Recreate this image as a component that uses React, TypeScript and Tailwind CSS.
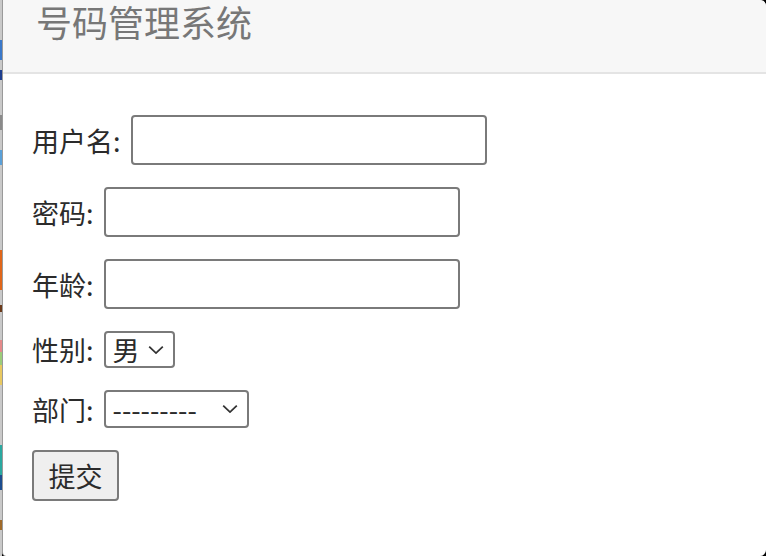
import React from 'react';

const font = "font-['Noto_Sans_CJK_SC',sans-serif]";

function Chevron() {
  return (
    <svg width="16" height="9" viewBox="0 0 16 9" className="pointer-events-none absolute top-1/2 -translate-y-1/2 right-[11px]">
      <path d="M1.2 1.2l6.8 6.4 6.8-6.4" fill="none" stroke="#333" strokeWidth="1.8" />
    </svg>
  );
}

function Field({ label }: { label: string }) {
  return (
    <div className="flex items-center gap-[10px]">
      <span>{label}:</span>
      <input
        type="text"
        className="h-[50px] w-[356px] rounded-[4px] border-2 border-[#7a7a7a] bg-white px-2 outline-none"
      />
    </div>
  );
}

export default function App() {
  return (
    <div className={`flex h-[556px] w-[766px] bg-black ${font}`}>
      {/* strip of the page behind the dialog */}
      <div className="w-[2px] bg-[linear-gradient(to_bottom,#c9c9c9_0,#c9c9c9_40px,#3a78c9_40px,#3a78c9_60px,#c9c9c9_60px,#c9c9c9_70px,#1e3f8f_70px,#1e3f8f_80px,#c9c9c9_80px,#c9c9c9_115px,#8a8a8a_115px,#8a8a8a_130px,#c9c9c9_130px,#c9c9c9_150px,#5aa0d8_150px,#5aa0d8_165px,#c9c9c9_165px,#c9c9c9_250px,#e0661a_250px,#e0661a_290px,#c9c9c9_290px,#c9c9c9_305px,#6b3a1a_305px,#6b3a1a_312px,#c9c9c9_312px,#c9c9c9_340px,#e58a8a_340px,#e58a8a_352px,#9ccc7a_352px,#9ccc7a_365px,#e8c860_365px,#e8c860_385px,#c9c9c9_385px,#c9c9c9_445px,#2aa8a0_445px,#2aa8a0_475px,#1c4d8f_475px,#1c4d8f_490px,#c9c9c9_490px,#c9c9c9_520px,#a06a2a_520px,#a06a2a_530px,#c9c9c9_530px)]" />
      <div className="flex flex-1 flex-col overflow-hidden rounded-r-[6px] rounded-bl-[4px] border-l border-[#9a9a9a] bg-white">
        <div className="h-[74px] border-b-2 border-[#e4e4e4] bg-[#f7f7f7] pl-[33px] pt-[1px]">
          <h3 className="text-[36px] leading-[40px] text-[#777]">号码管理系统</h3>
        </div>
        <form className="flex flex-col gap-[22px] pl-[29px] pt-[41px] text-[27px] leading-none text-[#2b2b2b]">
          <Field label="用户名" />
          <Field label="密码" />
          <Field label="年龄" />
          <div className="flex items-center gap-[10px]">
            <span>性别:</span>
            <div className="relative">
              <select className="h-[37px] w-[71px] appearance-none rounded-[4px] border-2 border-[#7a7a7a] bg-white pl-[7px] text-[27px] leading-none text-[#2b2b2b] outline-none">
                <option>男</option>
                <option>女</option>
              </select>
              <Chevron />
            </div>
          </div>
          <div className="flex items-center gap-[10px]">
            <span>部门:</span>
            <div className="relative">
              <select className="h-[38px] w-[145px] appearance-none rounded-[4px] border-2 border-[#7a7a7a] bg-white pl-[7px] text-[27px] leading-none text-[#2b2b2b] outline-none">
                <option>---------</option>
              </select>
              <Chevron />
            </div>
          </div>
          <div>
            <button
              type="button"
              className="h-[51px] w-[87px] rounded-[4px] border-2 border-[#7a7a7a] bg-[#efefef] text-[27px] leading-none text-[#2b2b2b]"
            >
              提交
            </button>
          </div>
        </form>
      </div>
    </div>
  );
}
